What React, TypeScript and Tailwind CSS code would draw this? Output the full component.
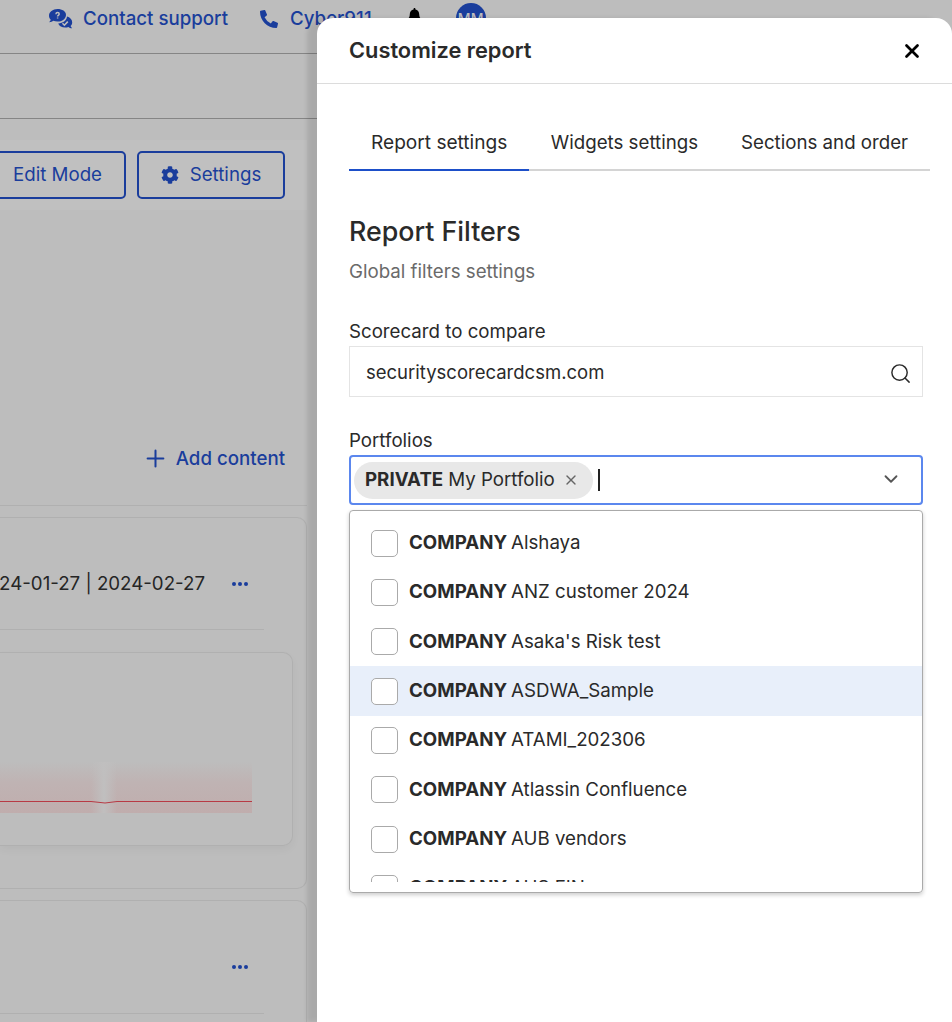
import React from 'react';
import { FaBell, FaCog, FaPhoneAlt } from 'react-icons/fa';
import { ChevronDown, Plus, Search, X } from 'lucide-react';

const companies = [
  'Alshaya',
  'ANZ customer 2024',
  "Asaka's Risk test",
  'ASDWA_Sample',
  'ATAMI_202306',
  'Atlassin Confluence',
  'AUB vendors',
  'AUS FIN',
];

const SupportIcon = () => (
  <svg viewBox="0 0 26 22" className="h-[22px] w-[26px] fill-[#1a3d9c]">
    <path d="M9.500 1C4.800 1 1 4 1 7.700c0 1.600.7 3 1.800 4.100-.4 1.100-1.400 2.100-1.600 2.400 1.600 0 3.200-.7 4.100-1.400 1.200.5 2.600.8 4.200.8 4.700 0 8.500-3 8.500-6.700S14.200 1 9.500 1z" />
    <path d="M19 8.500c-.3 4-4.200 6.800-8.800 6.900.9 2.400 3.700 4.100 6.900 4.100 1.200 0 2.300-.2 3.300-.6.800.6 2.200 1.300 3.600 1.300-.2-.3-1-1.200-1.400-2.200 1-1 1.600-2.200 1.600-3.600 0-2.900-2.200-5.100-5.200-5.900z" />
    <path d="M7.900 6.200c.1-1 .8-1.600 1.700-1.600s1.600.6 1.600 1.400c0 1.300-1.600 1.300-1.600 2.500M9.600 9.600v.9" className="fill-none stroke-[#bdbdbd] stroke-[1.500]" />
    <path d="M14.500 15.300l1.900 1.900 3.400-3.600" className="fill-none stroke-[#bdbdbd] stroke-[1.600]" />
  </svg>
);

const Dots = () => (
  <span className="flex items-center gap-[2px]">
    <span className="size-[4px] rounded-full bg-[#1a3d9c]" />
    <span className="size-[4px] rounded-full bg-[#1a3d9c]" />
    <span className="size-[4px] rounded-full bg-[#1a3d9c]" />
  </span>
);

const Backdrop = () => (
  <div className="flex h-full flex-col text-[18.700px] text-[#1a3d9c]">
    <header className="flex h-[54px] shrink-0 border-b border-[#858585] pb-[15px] font-medium">
      <div className="flex items-center pl-[48px]">
        <SupportIcon />
        <span className="ml-[9px]">Contact support</span>
      </div>
      <div className="ml-[32px] flex items-center">
        <FaPhoneAlt className="size-[18px]" />
        <span className="ml-[12px]">Cyber911</span>
      </div>
      <FaBell className="ml-[35px] mt-[8px] size-[15px] text-black" />
      <div className="ml-[34px] mt-[3px] flex size-[30px] items-center justify-center rounded-full bg-[#1a3d9c] text-[14px] text-[#bdbdbd]">
        MM
      </div>
    </header>
    <div className="h-[65px] shrink-0 border-b border-[#858585]" />
    <div className="mt-[21px] flex h-[70px] w-[307px] shrink-0 items-center justify-end gap-[11px] bg-[#c0c0c0] pr-[22px]">
      <div className="flex h-[48px] w-[190px] shrink-0 items-center justify-end rounded-[5px] border-2 border-[#1a3d9c] pr-[22px]">
        Edit Mode
      </div>
      <div className="flex h-[48px] w-[148px] shrink-0 items-center justify-center gap-[11px] rounded-[5px] border-2 border-[#1a3d9c]">
        <FaCog className="size-[18px]" />
        Settings
      </div>
    </div>
    <div className="flex h-[296px] w-[307px] shrink-0 flex-col justify-end border-b border-[#b0b0b0]">
      <div className="mb-[32px] flex items-center justify-end pr-[22px] font-medium">
        <Plus className="mr-[7px] size-[27px]" strokeWidth={1.800} />
        Add content
      </div>
    </div>
    <div className="mt-[11px] h-[372px] w-[307px] shrink-0 rounded-r-[10px] border border-l-0 border-[#b0b0b0]">
      <div className="flex h-[112px] w-[264px] items-center justify-end border-b border-[#b0b0b0] pt-[21px] text-[#252525]">
        <span className="whitespace-nowrap font-normal">2024-01-27 | 2024-02-27</span>
        <span className="ml-[27px] mr-[16px]">
          <Dots />
        </span>
      </div>
      <div className="mt-[22px] h-[194px] w-[293px] rounded-r-[10px] border border-l-0 border-[#b0b0b0] pt-[109px] shadow-[0_4px_8px_rgba(0,0,0,0.04)]">
        <div className="relative h-[51px] w-[252px] bg-gradient-to-b from-transparent via-[#bfb3b3] via-40% to-[#c0adad]">
          <div className="absolute left-[91px] top-0 h-full w-[26px] bg-gradient-to-r from-transparent via-[#c0bfbf] to-transparent" />
          <svg viewBox="0 0 252 51" className="absolute inset-0 h-[51px] w-[252px] fill-none stroke-[#b83a44]">
            <path d="M0 39.500H91L105 41L117 39.500H252" />
          </svg>
        </div>
      </div>
    </div>
    <div className="mt-[11px] h-[200px] w-[307px] shrink-0 rounded-r-[10px] border border-l-0 border-[#b0b0b0]">
      <div className="flex h-[113px] w-[264px] items-center justify-end border-b border-[#b0b0b0] pt-[20px]">
        <span className="mr-[16px]">
          <Dots />
        </span>
      </div>
    </div>
  </div>
);

const Panel = () => (
  <aside className="absolute bottom-0 left-[317px] right-0 top-[18px] rounded-t-[16px] bg-white text-[18.700px] text-[#2a2a2a] shadow-[-10px_0_4px_rgba(0,0,0,0.1)]">
    <div className="flex h-[66px] items-center justify-between border-b border-[#dcdcdc] pl-[32px] pr-[29.500px]">
      <h2 className="text-[21.800px] font-semibold">Customize report</h2>
      <X className="size-[22px] text-black" strokeWidth={3} />
    </div>
    <div className="ml-[32px] mr-[22px] mt-[35px] flex h-[52px] border-b-2 border-[#d4d4d4]">
      <div className="-mb-[2px] border-b-2 border-[#1d4fc9] px-[22px] pt-[9px] text-[19.100px]">Report settings</div>
      <div className="px-[21.500px] pt-[10px]">Widgets settings</div>
      <div className="px-[21.500px] pt-[10px]">Sections and order</div>
    </div>
    <div className="ml-[32px] mr-[29px]">
      <h3 className="mt-[42px] h-[36px] text-[26.800px] leading-[36px] font-medium">Report Filters</h3>
      <p className="mt-[9px] h-[28px] leading-[28px] text-[#6a6a6a]">Global filters settings</p>
      <label className="mt-[32px] block h-[28px] leading-[28px]">Scorecard to compare</label>
      <div className="flex h-[51px] items-center justify-between border border-[#e4e4e4] pl-[16px] pr-[10px] pt-[2px]">
        <span className="text-[18.500px]">securityscorecardcsm.com</span>
        <Search className="mt-[2px] size-[23px]" strokeWidth={1.500} />
      </div>
      <label className="mt-[30px] block h-[28px] leading-[28px]">Portfolios</label>
      <div className="flex h-[50px] items-center rounded-[4px] border-2 border-[#5b87ee] pl-[3px] pr-[19px]">
        <div className="flex h-[37px] items-center rounded-full bg-[#e8e8e8] pl-[11px] pr-[14px]">
          <span className="font-bold">PRIVATE</span>
          <span className="ml-[5px]">My Portfolio</span>
          <X className="ml-[8px] size-[16px] text-[#666666]" strokeWidth={2} />
        </div>
        <div className="ml-[5px] h-[22px] w-[2px] bg-[#222222]" />
        <ChevronDown className="mb-[3px] ml-auto size-[22px] text-[#555555]" strokeWidth={2} />
      </div>
      <div className="mt-[5px] rounded-[4px] border border-[#aaaaaa] pb-[10px] pt-[7.400px] shadow-[0_2px_4px_rgba(0,0,0,0.2)]">
        <ul className="h-[364px] overflow-hidden">
          {companies.map((name) => (
            <li
              key={name}
              className={`flex h-[49.330px] items-center pl-[21px] ${name === 'ASDWA_Sample' ? 'bg-[#e8effa]' : ''}`}
            >
              <span className="size-[27px] shrink-0 rounded-[5px] border border-[#aaaaaa] bg-white" />
              <span className="ml-[11px] font-bold">COMPANY</span>
              <span className="ml-[4px]">{name}</span>
            </li>
          ))}
        </ul>
      </div>
    </div>
  </aside>
);

export default function App() {
  return (
    <div className="relative h-[1022px] w-[952px] overflow-hidden bg-[#bdbdbd] font-['Inter',sans-serif]">
      <Backdrop />
      <Panel />
    </div>
  );
}
